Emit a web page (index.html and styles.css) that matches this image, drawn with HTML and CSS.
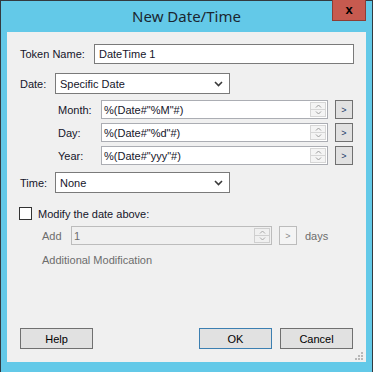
FILE: index.html
```html
<!DOCTYPE html>
<html lang="en">
<head>
    <meta charset="UTF-8">
    <title>New Date/Time</title>
    <link rel="stylesheet" href="styles.css">
</head>
<body>
    <div class="window">
        <!-- Title bar -->
        <div class="titlebar">
            <span class="title">New Date/Time</span>
            <button class="close-btn">x</button>
        </div>

        <!-- Client area -->
        <div class="client">
            <div class="row row-token">
                <label class="lbl lbl-token">Token Name:</label>
                <div class="textbox textbox-token">DateTime 1</div>
            </div>

            <div class="row row-date">
                <label class="lbl lbl-short">Date:</label>
                <div class="combo">
                    <span>Specific Date</span>
                    <svg class="chev" width="9" height="6" viewBox="0 0 9 6"><polyline points="1,1 4.5,4.5 8,1" fill="none" stroke="#3a3a3a" stroke-width="1.6"/></svg>
                </div>
            </div>

            <div class="row row-part row-month">
                <label class="lbl lbl-part">Month:</label>
                <div class="spin">
                    <span class="spin-text">%(Date#"%M"#)</span>
                    <div class="spin-btns">
                        <div class="spin-up"><svg width="7" height="4" viewBox="0 0 7 4"><polyline points="1,3.5 3.5,1 6,3.5" fill="none" stroke="#9a9a9a"/></svg></div>
                        <div class="spin-down"><svg width="7" height="4" viewBox="0 0 7 4"><polyline points="1,0.5 3.5,3 6,0.5" fill="none" stroke="#9a9a9a"/></svg></div>
                    </div>
                </div>
                <button class="mini-btn">&gt;</button>
            </div>

            <div class="row row-part">
                <label class="lbl lbl-part">Day:</label>
                <div class="spin">
                    <span class="spin-text">%(Date#"%d"#)</span>
                    <div class="spin-btns">
                        <div class="spin-up"><svg width="7" height="4" viewBox="0 0 7 4"><polyline points="1,3.5 3.5,1 6,3.5" fill="none" stroke="#9a9a9a"/></svg></div>
                        <div class="spin-down"><svg width="7" height="4" viewBox="0 0 7 4"><polyline points="1,0.5 3.5,3 6,0.5" fill="none" stroke="#9a9a9a"/></svg></div>
                    </div>
                </div>
                <button class="mini-btn">&gt;</button>
            </div>

            <div class="row row-part">
                <label class="lbl lbl-part">Year:</label>
                <div class="spin">
                    <span class="spin-text">%(Date#"yyy"#)</span>
                    <div class="spin-btns">
                        <div class="spin-up"><svg width="7" height="4" viewBox="0 0 7 4"><polyline points="1,3.5 3.5,1 6,3.5" fill="none" stroke="#9a9a9a"/></svg></div>
                        <div class="spin-down"><svg width="7" height="4" viewBox="0 0 7 4"><polyline points="1,0.5 3.5,3 6,0.5" fill="none" stroke="#9a9a9a"/></svg></div>
                    </div>
                </div>
                <button class="mini-btn">&gt;</button>
            </div>

            <div class="row row-time">
                <label class="lbl lbl-short">Time:</label>
                <div class="combo">
                    <span>None</span>
                    <svg class="chev" width="9" height="6" viewBox="0 0 9 6"><polyline points="1,1 4.5,4.5 8,1" fill="none" stroke="#3a3a3a" stroke-width="1.6"/></svg>
                </div>
            </div>

            <div class="row row-check">
                <span class="checkbox"></span>
                <span class="check-text">Modify the date above:</span>
            </div>

            <div class="row row-add">
                <label class="lbl lbl-add disabled">Add</label>
                <div class="spin spin-disabled">
                    <span class="spin-text">1</span>
                    <div class="spin-btns">
                        <div class="spin-up"><svg width="7" height="4" viewBox="0 0 7 4"><polyline points="1,3.5 3.5,1 6,3.5" fill="none" stroke="#a8a8a8"/></svg></div>
                        <div class="spin-down"><svg width="7" height="4" viewBox="0 0 7 4"><polyline points="1,0.5 3.5,3 6,0.5" fill="none" stroke="#a8a8a8"/></svg></div>
                    </div>
                </div>
                <button class="mini-btn mini-disabled">&gt;</button>
                <span class="days disabled">days</span>
            </div>

            <div class="row row-extra">
                <span class="disabled">Additional Modification</span>
            </div>

            <div class="row row-buttons">
                <button class="button">Help</button>
                <button class="button button-default">OK</button>
                <button class="button">Cancel</button>
            </div>

            <svg class="grip" width="9" height="9" viewBox="0 0 9 9">
                <rect x="6" y="0" width="2" height="2" fill="#b8b8b8"/>
                <rect x="3" y="3" width="2" height="2" fill="#b8b8b8"/>
                <rect x="6" y="3" width="2" height="2" fill="#b8b8b8"/>
                <rect x="0" y="6" width="2" height="2" fill="#b8b8b8"/>
                <rect x="3" y="6" width="2" height="2" fill="#b8b8b8"/>
                <rect x="6" y="6" width="2" height="2" fill="#b8b8b8"/>
            </svg>
        </div>
    </div>
    <div class="behind-line"></div>
</body>
</html>
```

FILE: styles.css
```css
:root {
    --frame: #63c9e8;
    --frame-border: #333a40;
    --client-bg: #f0f0f0;
    --text: #15152a;
    --text-disabled: #6d6d6d;
    --box-border: #7a7a7a;
    --spin-border: #abadb3;
    --btn-bg: #e1e1e1;
    --btn-border: #707070;
    --font-ui: 'Liberation Sans', Arial, sans-serif;
    --font-title: 'Noto Sans', 'Open Sans', sans-serif;
}

body {
    margin: 0;
    padding: 0;
    background: #ffffff;
    font-family: var(--font-ui);
    font-size: 11px;
    color: var(--text);
}

.window {
    width: 372px;
    height: 367px;
    border: 1px solid var(--frame-border);
    background: var(--frame);
    padding: 0 6px 6px 6px;
    box-sizing: content-box;
    width: 359px;
    display: flex;
    flex-direction: column;
}

.titlebar {
    position: relative;
    height: 31px;
    display: flex;
    align-items: center;
    justify-content: center;
}

.title {
    font-family: var(--font-title);
    font-size: 15px;
    color: #1b2630;
    margin-top: -1px;
}

.close-btn {
    position: absolute;
    top: -1px;
    right: 0;
    width: 34px;
    height: 21px;
    background: #c75a4f;
    border: 1px solid #8e3d35;
    border-top: none;
    color: #000;
    font-family: var(--font-ui);
    font-weight: bold;
    font-size: 13px;
    line-height: 16px;
    padding: 0;
}

.client {
    position: relative;
    height: 330px;
    background: var(--client-bg);
    display: flex;
    flex-direction: column;
    padding: 12px 0 13px 0;
    box-sizing: border-box;
}

.row {
    display: flex;
    align-items: center;
    flex: none;
}

.lbl {
    flex: none;
}

.row-token {
    height: 20px;
    padding-left: 13px;
}

.lbl-token {
    width: 74px;
}

.textbox {
    box-sizing: border-box;
    height: 20px;
    border: 1px solid var(--box-border);
    background: #fff;
    padding: 0 4px;
    display: flex;
    align-items: center;
}

.textbox-token {
    width: 260px;
}

.row-date {
    margin-top: 9px;
    height: 21px;
    padding-left: 13px;
}

.row-time {
    margin-top: 7px;
    height: 21px;
    padding-left: 13px;
}

.lbl-short {
    width: 35px;
}

.combo {
    box-sizing: border-box;
    width: 175px;
    height: 21px;
    border: 1px solid var(--box-border);
    background: #fff;
    padding: 0 6px 0 4px;
    display: flex;
    align-items: center;
    justify-content: space-between;
}

.chev {
    margin-top: 1px;
}

.row-part {
    margin-top: 4px;
    height: 19px;
    padding-left: 51px;
}

.row-month {
    margin-top: 6px;
}

.lbl-part {
    width: 43px;
}

.spin {
    box-sizing: border-box;
    width: 227px;
    height: 19px;
    border: 1px solid var(--spin-border);
    background: #fff;
    display: flex;
    align-items: stretch;
}

.spin-text {
    flex: 1;
    display: flex;
    align-items: center;
    padding-left: 2px;
}

.spin-btns {
    width: 16px;
    margin: 1px;
    display: flex;
    flex-direction: column;
}

.spin-up,
.spin-down {
    flex: 1;
    border: 1px solid #d6d6d6;
    background: #f4f4f4;
    display: flex;
    align-items: center;
    justify-content: center;
}

.spin-down {
    border-top: none;
}

.mini-btn {
    margin-left: 7px;
    width: 18px;
    height: 19px;
    box-sizing: border-box;
    border: 1px solid var(--btn-border);
    background: var(--btn-bg);
    padding: 0;
    font-family: var(--font-ui);
    font-size: 9px;
    color: #1a3a6a;
}

.row-check {
    margin-top: 14px;
    height: 13px;
    padding-left: 12px;
}

.checkbox {
    width: 13px;
    height: 13px;
    box-sizing: border-box;
    border: 1px solid #333;
    background: #fff;
}

.check-text {
    margin-left: 6px;
}

.row-add {
    margin-top: 6px;
    height: 19px;
    padding-left: 35px;
}

.lbl-add {
    width: 29px;
}

.spin-disabled {
    width: 201px;
    border-color: #bcbcbc;
    background: #f0f0f0;
    color: var(--text-disabled);
}

.spin-disabled .spin-up,
.spin-disabled .spin-down {
    border-color: #cfcfcf;
    background: #f0f0f0;
}

.mini-disabled {
    border-color: #bcbcbc;
    background: #f4f4f4;
    color: #8a8a8a;
}

.days {
    margin-left: 8px;
}

.disabled {
    color: var(--text-disabled);
}

.row-extra {
    margin-top: 8px;
    height: 13px;
    padding-left: 35px;
}

.row-buttons {
    margin-top: auto;
    height: 21px;
    padding-left: 13px;
    gap: 8px;
}

.button {
    width: 73px;
    height: 21px;
    box-sizing: border-box;
    border: 1px solid var(--btn-border);
    background: var(--btn-bg);
    font-family: var(--font-ui);
    font-size: 11px;
    color: #000;
    padding: 0;
}

.button:first-child {
    margin-right: 98px;
}

.button-default {
    border-color: #3c7fb1;
}

.grip {
    position: absolute;
    right: 2px;
    bottom: 1px;
}

.behind-line {
    margin-left: 94px;
    width: 1px;
    height: 3px;
    background: #c8c8c8;
}
```
